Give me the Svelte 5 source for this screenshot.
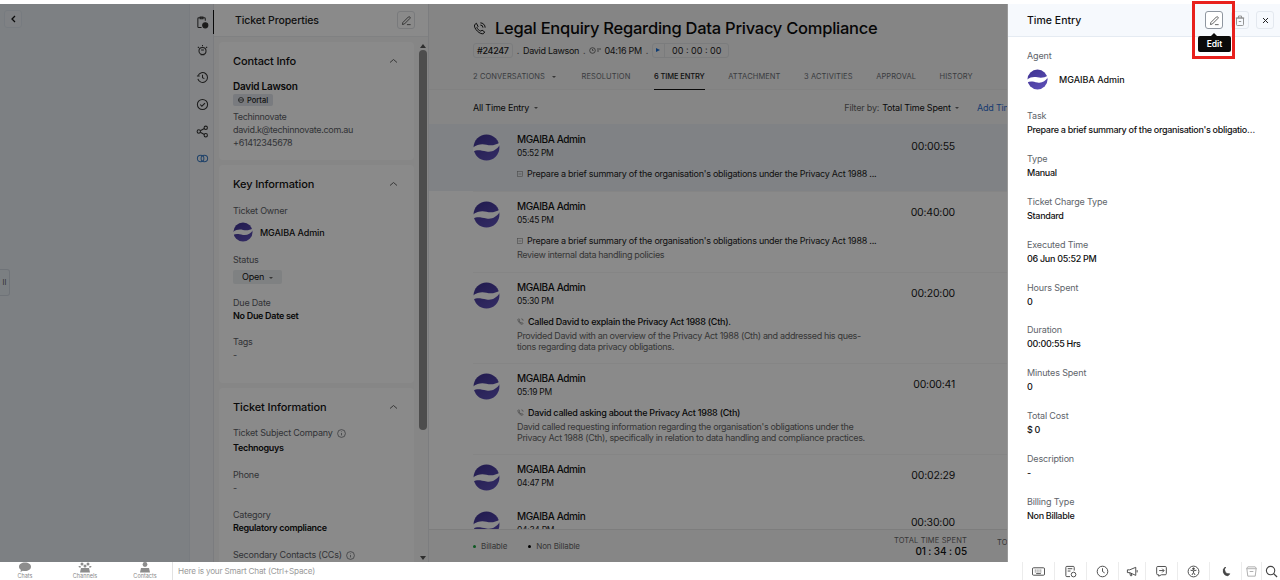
<script lang="ts">
  const rail = ["props", "bulb", "history", "check", "share", "link"];

  const tabs = [
    { label: "2 CONVERSATIONS", caret: true },
    { label: "RESOLUTION" },
    { label: "6 TIME ENTRY", active: true },
    { label: "ATTACHMENT" },
    { label: "3 ACTIVITIES" },
    { label: "APPROVAL" },
    { label: "HISTORY" },
  ];

  const longTask = "Prepare a brief summary of the organisation's obligations under the Privacy Act 1988 ...";

  const entries = [
    { time: "05:52 PM", spent: "00:00:55", kind: "task", subject: longTask, selected: true, h: 67 },
    { time: "05:45 PM", spent: "00:40:00", kind: "task", subject: longTask, desc: ["Review internal data handling policies"], h: 81 },
    {
      time: "05:30 PM", spent: "00:20:00", kind: "call", subject: "Called David to explain the Privacy Act 1988 (Cth).",
      desc: ["Provided David with an overview of the Privacy Act 1988 (Cth) and addressed his ques-", "tions regarding data privacy obligations."], h: 91,
    },
    {
      time: "05:19 PM", spent: "00:00:41", kind: "call", subject: "David called asking about the Privacy Act 1988 (Cth)",
      desc: ["David called requesting information regarding the organisation's obligations under the", "Privacy Act 1988 (Cth), specifically in relation to data handling and compliance practices."], h: 91,
    },
    { time: "04:47 PM", spent: "00:02:29", h: 47 },
    { time: "04:34 PM", spent: "00:30:00", h: 47 },
  ];

  const details = [
    { label: "Task", value: "Prepare a brief summary of the organisation's obligations under the Privacy Act" },
    { label: "Type", value: "Manual" },
    { label: "Ticket Charge Type", value: "Standard" },
    { label: "Executed Time", value: "06 Jun 05:52 PM" },
    { label: "Hours Spent", value: "0" },
    { label: "Duration", value: "00:00:55 Hrs" },
    { label: "Minutes Spent", value: "0" },
    { label: "Total Cost", value: "$ 0" },
    { label: "Description", value: "-" },
    { label: "Billing Type", value: "Non Billable" },
  ];

  const dock = ["keyboard", "notes", "clock", "megaphone", "share", "access", "moon", "cup", "search"];
</script>

{#snippet logo(size)}
  <svg class="logo" width={size} height={size} viewBox="0 0 24 24">
    <defs>
      <linearGradient id="logo-fill" x1="0" y1="0" x2="0.6" y2="1">
        <stop offset="0" stop-color="#3d3190" />
        <stop offset="1" stop-color="#5b4db4" />
      </linearGradient>
    </defs>
    <circle cx="12" cy="12" r="11.5" fill="url(#logo-fill)" />
    <path d="M0 12C4 9 8 8.500 12 9.500S20 10 24 7.500v2C21 14 17 16.500 12 15.500S4 13.500 0 15.500z" fill="#fff" />
  </svg>
{/snippet}

{#snippet pencil()}
  <svg width="11" height="11" viewBox="0 0 12 12" fill="none" stroke="currentColor" stroke-width=".9">
    <path d="M2 8.200 8 2.200a1.100 1.100 0 0 1 1.700 1.600L3.700 9.800 1.600 10.400z" />
    <path d="M6.500 10.500h4" />
  </svg>
{/snippet}

{#snippet chevron()}
  <svg class="chev" width="9" height="6" viewBox="0 0 9 6" fill="none" stroke="currentColor" stroke-width=".9">
    <path d="M1 4.500 4.500 1.500 8 4.500" />
  </svg>
{/snippet}

{#snippet info()}
  <svg class="info" width="9" height="9" viewBox="0 0 9 9" fill="none" stroke="currentColor" stroke-width=".7">
    <circle cx="4.500" cy="4.500" r="3.900" /><path d="M4.500 4v2.400M4.500 2.500v.6" />
  </svg>
{/snippet}

{#snippet railIcon(name)}
  <svg width="13" height="13" viewBox="0 0 14 14" fill="none" stroke="currentColor" stroke-width="1.1">
    {#if name === "props"}
      <path d="M6 12.500H3a1 1 0 0 1-1-1V3a1 1 0 0 1 1-1h6a1 1 0 0 1 1 1v2" />
      <path d="M4.500 1h3v2h-3z" />
      <circle cx="10" cy="10" r="2.800" fill="currentColor" />
    {:else if name === "bulb"}
      <circle cx="7" cy="7.500" r="3.800" />
      <path d="M5 11.500h4M7 1v1.500M2 3l1.200 1.200M12 3l-1.200 1.200M5.500 6.500h3" />
    {:else if name === "history"}
      <path d="M2.200 5A5.300 5.300 0 1 1 2 8.500" />
      <path d="M1 5.500h3M7 4v3.200l2 1" />
    {:else if name === "check"}
      <circle cx="7" cy="7" r="5.500" /><path d="M4.500 7 6.300 8.800 9.700 5.400" />
    {:else if name === "share"}
      <circle cx="3" cy="7" r="1.800" /><circle cx="10.500" cy="3" r="1.800" /><circle cx="10.500" cy="11" r="1.800" />
      <path d="M4.600 6.200 9 3.800M4.600 7.800 9 10.200" />
    {:else}
      <circle cx="5" cy="7" r="3.500" /><circle cx="9" cy="7" r="3.500" />
    {/if}
  </svg>
{/snippet}

{#snippet dockIcon(name)}
  <svg width="13" height="13" viewBox="0 0 14 14" fill="none" stroke="currentColor" stroke-width="1">
    {#if name === "keyboard"}
      <rect x="0.500" y="3" width="13" height="8" rx="1.200" /><path d="M3 5.500h8M3 7.500h8" stroke-dasharray="1 1" /><path d="M4.500 9.300h5" />
    {:else if name === "notes"}
      <path d="M6.500 12.500H3a1 1 0 0 1-1-1v-9a1 1 0 0 1 1-1h7a1 1 0 0 1 1 1V6" /><path d="M4 4h5M4 6.500h3" /><circle cx="10.300" cy="10.300" r="2.500" />
    {:else if name === "clock"}
      <circle cx="7" cy="7" r="5.700" /><path d="M7 3.500V7l2.300 1.500" />
    {:else if name === "megaphone"}
      <path d="M1.500 5.200v3h2.500l6.500 3V2.500L4 5.200zM4 8.200l.8 3.300h1.500l-.6-2.700M12 5.500v2.500" />
    {:else if name === "share"}
      <path d="M4 12V10.500H3a1.200 1.200 0 0 1-1.200-1.200V2.800A1.200 1.200 0 0 1 3 1.600h8a1.200 1.200 0 0 1 1.200 1.200v6.500a1.200 1.200 0 0 1-1.200 1.200H7z" /><path d="M4.500 6h5M7.800 4l2 2-2 2" />
    {:else if name === "access"}
      <circle cx="7" cy="7" r="5.800" /><circle cx="7" cy="4" r=".9" fill="currentColor" /><path d="M3.800 5.600 7 6.300l3.200-.7M7 6.300V8M7 8l-1.700 2.800M7 8l1.700 2.800" />
    {:else if name === "moon"}
      <path d="M9.500 11.500A5 5 0 0 1 7 2.200 4.500 4.500 0 0 0 11.500 9.500a5 5 0 0 1-2 2z" fill="currentColor" />
    {:else if name === "cup"}
      <path d="M2 4h10l-1 8H3zM1.500 4l1.500-2h8l1.500 2M5 7h4" />
    {:else}
      <circle cx="6" cy="6" r="4.500" stroke-width="1.200" /><path d="M9.300 9.300 13 13" stroke-width="1.400" />
    {/if}
  </svg>
{/snippet}

<div class="page">
  <div class="topstrip"></div>

  <div class="workspace">
    <aside class="nav">
      <button class="back" aria-label="Back">
        <svg width="7" height="8" viewBox="0 0 7 8" fill="none" stroke="currentColor" stroke-width="1.3"><path d="M5 1 2 4l3 3" /></svg>
      </button>
      <div class="handle">II</div>
    </aside>

    <nav class="rail">
      {#each rail as r, i}
        <div class="rail-item" class:on={i === 0} class:link={r === "link"}>{@render railIcon(r)}</div>
      {/each}
    </nav>

    <section class="props">
      <header class="props-head">
        <span>Ticket Properties</span>
        <button class="icon-btn" aria-label="Edit properties">{@render pencil()}</button>
      </header>
      <div class="props-body">
        <div class="cards">
          <div class="card card-contact">
            <h3>Contact Info {@render chevron()}</h3>
            <div class="person">David Lawson</div>
            <span class="pill">
              <svg width="6" height="6" viewBox="0 0 6 6" fill="none" stroke="currentColor" stroke-width=".7"><circle cx="3" cy="3" r="2.500" /><path d="M.5 3h5" /></svg>
              Portal
            </span>
            <div class="sub">Techinnovate</div>
            <div class="sub">david.k@techinnovate.com.au</div>
            <div class="sub">+61412345678</div>
          </div>

          <div class="card card-key">
            <h3>Key Information {@render chevron()}</h3>
            <div class="label owner-label">Ticket Owner</div>
            <div class="owner">{@render logo(20)}<b>MGAIBA Admin</b></div>
            <div class="label status-label">Status</div>
            <span class="status">Open <i class="caret"></i></span>
            <div class="label due-label">Due Date</div>
            <div class="value">No Due Date set</div>
            <div class="label tags-label">Tags</div>
            <div class="dash">-</div>
          </div>

          <div class="card">
            <h3>Ticket Information {@render chevron()}</h3>
            <div class="label">Ticket Subject Company {@render info()}</div>
            <div class="value first">Technoguys</div>
            <div class="label gap">Phone</div>
            <div class="dash">-</div>
            <div class="label gap">Category</div>
            <div class="value">Regulatory compliance</div>
            <div class="label gap">Secondary Contacts (CCs) {@render info()}</div>
          </div>
        </div>
        <div class="scrollbar"><i class="up"></i><b></b><i class="down"></i></div>
      </div>
    </section>

    <main class="ticket">
      <header class="ticket-head">
        <h1>
          <svg width="13" height="13" viewBox="0 0 15 15" fill="none" stroke="currentColor" stroke-width="1.1">
            <path d="M4 1.500 2 3c-1 2 .5 5 3 7.500s5.500 3.500 7 3l1.500-2-3-2-1.500 1C7 10 5 8 4.500 6.500l1.300-1.300zM8.500 3.500a3 3 0 0 1 3 3M8.500 1a5.500 5.500 0 0 1 5.500 5.500" />
          </svg>
          Legal Enquiry Regarding Data Privacy Compliance
        </h1>
        <div class="meta">
          <span class="tag">#24247</span>
          <span class="dot">.</span>
          <span>David Lawson</span>
          <span class="dot">.</span>
          <span class="at">
            <svg width="13" height="7" viewBox="0 0 13 7" fill="none" stroke="currentColor" stroke-width=".8"><circle cx="3.500" cy="3.500" r="2.800" /><path d="M3.500 2v1.500h1M8 2h4M8 4h2" /></svg>
            04:16 PM
          </span>
          <span class="dot">.</span>
          <span class="timer">
            <span class="play"></span>
            <span class="clock">00 : 00 : 00</span>
          </span>
        </div>
      </header>

      <div class="tabs">
        {#each tabs as t}
          <span class="tab" class:active={t.active}>{t.label}{#if t.caret}<i class="caret"></i>{/if}</span>
        {/each}
      </div>

      <div class="filter">
        <span class="all">All Time Entry <i class="caret"></i></span>
        <span class="filter-by">Filter by:</span>
        <span class="total">Total Time Spent <i class="caret"></i></span>
        <span class="add">Add Time</span>
      </div>

      <div class="entries">
        {#each entries as e, i}
          <div class="entry" class:selected={e.selected} style="height: {e.h}px">
            {@render logo(27)}
            <div class="entry-main">
              <div class="entry-name">MGAIBA Admin</div>
              <div class="entry-time">{e.time}</div>
              {#if e.subject}
                <div class="entry-subject" class:call={e.kind === "call"}>
                  {#if e.kind === "call"}
                    <svg width="7" height="7" viewBox="0 0 8 8" fill="none" stroke="currentColor" stroke-width=".9"><path d="M2 .8 1 1.800c0 2.500 2.500 5.200 5 5.400l1-1-1.500-1-.8.500C3.800 5.300 2.800 4.200 2.500 3.300l.6-.7zM5 1a2 2 0 0 1 2 2" /></svg>
                  {:else}
                    <svg width="6" height="6" viewBox="0 0 6 6" fill="none" stroke="currentColor" stroke-width=".6"><rect x=".5" y=".5" width="5" height="5" /><path d="M1.500 3h3" /></svg>
                  {/if}
                  <span>{e.subject}</span>
                </div>
              {/if}
              {#if e.desc}
                <div class="entry-desc">
                  {#each e.desc as line}<div>{line}</div>{/each}
                </div>
              {/if}
            </div>
            <div class="entry-spent">{e.spent}</div>
            {#if i > 0 && i < 5}<i class="entry-line"></i>{/if}
          </div>
        {/each}
      </div>

      <footer class="ticket-foot">
        <span class="legend"><i class="green"></i>Billable</span>
        <span class="legend"><i class="black"></i>Non Billable</span>
        <div class="total-spent">
          <small>TOTAL TIME SPENT</small>
          <strong>01 : 34 : 05</strong>
        </div>
        <div class="total-cut"><small>TOTAL</small></div>
      </footer>
    </main>

    <div class="dim"></div>

    <aside class="drawer">
      <header class="drawer-head">
        <h2>Time Entry</h2>
        <button class="icon-btn focus" aria-label="Edit">{@render pencil()}</button>
        <button class="icon-btn plain trash" aria-label="Delete">
          <svg width="10" height="11" viewBox="0 0 10 11" fill="none" stroke="currentColor" stroke-width=".9"><path d="M1.500 3h7v6.500a1 1 0 0 1-1 1h-5a1 1 0 0 1-1-1zM.8 3h8.400M3.500 3V1h3v2M3.800 6.500h2.400" /></svg>
        </button>
        <button class="icon-btn plain" aria-label="Close">
          <svg width="7" height="7" viewBox="0 0 7 7" fill="none" stroke="#222" stroke-width="1"><path d="m1 1 5 5M6 1 1 6" /></svg>
        </button>
      </header>

      <div class="drawer-body">
        <div class="d-label">Agent</div>
        <div class="agent">{@render logo(21)}<span>MGAIBA Admin</span></div>
        {#each details as d}
          <div class="field">
            <div class="d-label">{d.label}</div>
            <div class="d-value">{d.value}</div>
          </div>
        {/each}
      </div>
    </aside>

    <div class="tooltip">Edit</div>
    <div class="callout"></div>
  </div>

  <footer class="dock">
    <div class="quick">
      <span>
        <svg width="14" height="11" viewBox="0 0 14 11"><path d="M7 .5c3.500 0 6 1.800 6 4.200S10.500 9 7 9c-.8 0-1.500-.1-2.200-.3L2.500 10l.4-2.200C1.700 7 1 5.900 1 4.700 1 2.300 3.500.5 7 .5z" fill="#8d8d8d" /></svg>
        Chats
      </span>
      <span>
        <svg width="14" height="11" viewBox="0 0 14 11" fill="#8d8d8d"><circle cx="4" cy="2" r="1.500" /><circle cx="10" cy="2" r="1.500" /><circle cx="7" cy="4" r="1.500" /><path d="M3 6h8l1 4.500H2zM.5 4h2l.5 1.500H1zM11.500 4h2l-.5 1.500h-2z" /></svg>
        Channels
      </span>
      <span>
        <svg width="14" height="11" viewBox="0 0 14 11" fill="#8d8d8d"><circle cx="7" cy="2.500" r="2.400" /><path d="M3 6h8l1 4.500H2z" /></svg>
        Contacts
      </span>
    </div>
    <div class="smart">Here is your Smart Chat (Ctrl+Space)</div>
    <div class="tools">
      {#each dock as d}
        <span class="tool tool-{d}">{@render dockIcon(d)}</span>
      {/each}
    </div>
  </footer>
</div>

<style>
  :global(body) {
    margin: 0;
    background: #fff;
  }

  .page {
    width: 1280px;
    height: 580px;
    display: flex;
    flex-direction: column;
    overflow: hidden;
    font-family: Inter, "Noto Sans", "Liberation Sans", sans-serif;
    color: #111;
    background: #fff;
  }

  button {
    font: inherit;
    padding: 0;
    cursor: pointer;
  }

  h1, h2, h3 {
    margin: 0;
  }

  .topstrip {
    height: 4px;
    flex-shrink: 0;
  }

  .workspace {
    flex: 1;
    min-height: 0;
    display: flex;
    position: relative;
  }

  .dim {
    position: absolute;
    left: 0;
    top: 0;
    bottom: 0;
    width: 1007px;
    background: rgba(0, 0, 0, 0.46);
    pointer-events: none;
  }

  /* nav column */
  .nav {
    width: 190px;
    flex-shrink: 0;
    background: #e8edf2;
    position: relative;
    border-right: 1px solid #dfe5ec;
    box-sizing: border-box;
  }
  .back {
    position: absolute;
    left: 4px;
    top: 6px;
    width: 18px;
    height: 18px;
    background: #eaeff4;
    border: 1px solid #dde4ec;
    border-radius: 3px;
    color: #111;
    display: flex;
    align-items: center;
    justify-content: center;
  }
  .handle {
    position: absolute;
    left: 0;
    top: 265px;
    width: 10px;
    height: 27px;
    box-sizing: border-box;
    background: #e4eaf1;
    border: 1px solid #cdd5de;
    border-left: 0;
    border-radius: 0 3px 3px 0;
    font-size: 7px;
    line-height: 25px;
    text-align: center;
    color: #555;
  }

  .rail {
    width: 24px;
    flex-shrink: 0;
    background: #f2f4f7;
    border-right: 1px solid #e3e6ea;
    box-sizing: border-box;
    padding-top: 6px;
  }
  .rail-item {
    height: 27px;
    display: flex;
    align-items: center;
    padding-left: 6px;
    box-sizing: border-box;
    color: #333;
  }
  .rail-item.on {
    border-right: 1px solid #111;
    height: 24px;
    margin-bottom: 3px;
    margin-right: -1px;
  }
  .rail-item.link {
    color: #3b7bc4;
  }

  /* ticket properties */
  .props {
    width: 215px;
    flex-shrink: 0;
    display: flex;
    flex-direction: column;
    background: #f7f7f7;
    border-right: 1px solid #e6e8ea;
    box-sizing: border-box;
  }
  .props-head {
    height: 32px;
    flex-shrink: 0;
    display: flex;
    align-items: center;
    justify-content: space-between;
    padding: 0 13px 0 21px;
    background: #fff;
    font-size: 10.5px;
    font-weight: 500;
    letter-spacing: -0.1px;
    color: #222;
    border-bottom: 1px solid #eceef0;
  }
  .icon-btn {
    width: 18px;
    height: 18px;
    border: 1px solid #dfe2e6;
    border-radius: 3px;
    background: #fff;
    color: #444;
    display: flex;
    align-items: center;
    justify-content: center;
    flex-shrink: 0;
  }
  .props-body {
    flex: 1;
    min-height: 0;
    display: flex;
    padding-top: 5px;
    overflow: hidden;
  }
  .cards {
    width: 195px;
    margin-left: 5px;
    flex-shrink: 0;
    display: flex;
    flex-direction: column;
    gap: 5px;
  }
  .card {
    background: #fff;
    border-radius: 4px;
    padding: 12px 14px;
    box-sizing: border-box;
    flex-shrink: 0;
  }
  .card-contact {
    height: 118px;
  }
  .card-key {
    height: 218px;
  }
  .card h3 {
    font-size: 11px;
    font-weight: 500;
    line-height: 14px;
    letter-spacing: -0.12px;
    display: flex;
    justify-content: space-between;
    align-items: center;
    padding-right: 2px;
    color: #111;
  }
  .chev {
    color: #555;
  }
  .person {
    font-size: 10px;
    font-weight: 600;
    letter-spacing: -0.25px;
    margin-top: 12px;
    line-height: 12px;
  }
  .pill {
    display: flex;
    width: fit-content;
    align-items: center;
    gap: 3px;
    margin-top: 2px;
    height: 12px;
    padding: 0 5px;
    border-radius: 2px;
    background: #dfe4ea;
    font-size: 7.5px;
    font-weight: 500;
    color: #222;
  }
  .sub {
    font-size: 9px;
    line-height: 13px;
    letter-spacing: -0.3px;
    color: #5c6066;
  }
  .pill + .sub {
    margin-top: 4px;
  }
  .label {
    font-size: 9px;
    line-height: 12px;
    letter-spacing: -0.2px;
    color: #5c6066;
    margin-top: 13px;
    display: flex;
    align-items: center;
    gap: 4px;
  }
  .owner-label {
    margin-top: 14px;
  }
  .info {
    color: #5c6066;
  }
  .owner {
    display: flex;
    align-items: center;
    gap: 7px;
    margin-top: 5px;
    font-size: 9px;
    letter-spacing: -0.1px;
  }
  .owner b {
    font-weight: 500;
  }
  .status-label {
    margin-top: 12px;
  }
  .status {
    display: block;
    width: fit-content;
    margin-top: 4px;
    padding: 0 9px;
    height: 14px;
    line-height: 14px;
    border-radius: 2px;
    background: #ebeef1;
    font-size: 9px;
    letter-spacing: -0.2px;
  }
  .due-label {
    margin-top: 13px;
  }
  .tags-label {
    margin-top: 13px;
  }
  .value {
    font-size: 9px;
    font-weight: 600;
    line-height: 14px;
    letter-spacing: -0.3px;
    margin-top: 0;
  }
  .value.first {
    margin-top: 2px;
  }
  .dash {
    font-size: 9px;
    line-height: 14px;
    color: #5c6066;
    margin-top: 0;
  }
  .gap {
    margin-top: 14px;
  }
  .scrollbar {
    width: 8px;
    margin-left: 5px;
    flex-shrink: 0;
    position: relative;
  }
  .scrollbar b {
    position: absolute;
    left: 0;
    right: 0;
    top: 8px;
    height: 380px;
    border-radius: 4px;
    background: #8f8f8f;
  }
  .scrollbar i {
    position: absolute;
    left: 1px;
    border-left: 3px solid transparent;
    border-right: 3px solid transparent;
  }
  .scrollbar .up {
    top: 2px;
    border-bottom: 4px solid #555;
  }
  .scrollbar .down {
    bottom: 2px;
    border-top: 4px solid #555;
  }

  /* main ticket */
  .ticket {
    flex: 1;
    min-width: 0;
    display: flex;
    flex-direction: column;
    background: #fff;
  }
  .ticket-head {
    height: 63px;
    flex-shrink: 0;
    box-sizing: border-box;
    padding: 13px 0 0 44px;
    background: #f5f5f5;
  }
  h1 {
    display: flex;
    align-items: center;
    gap: 9px;
    font-size: 16.5px;
    line-height: 22px;
    font-weight: 500;
    color: #0c0c0c;
    white-space: nowrap;
    letter-spacing: -0.25px;
  }
  .meta {
    display: flex;
    align-items: center;
    gap: 4px;
    margin-top: 4px;
    font-size: 9px;
    letter-spacing: -0.3px;
    height: 15px;
    color: #1c1c1c;
  }
  .tag {
    padding: 0 3px;
    border: 1px solid #e3e5e8;
    border-radius: 3px;
    line-height: 13px;
    font-weight: 500;
  }
  .dot {
    color: #777;
  }
  .at {
    display: inline-flex;
    align-items: center;
    gap: 2px;
  }
  .at svg {
    color: #555;
  }
  .timer {
    display: inline-flex;
    align-items: center;
    height: 13px;
    border: 1px solid #e3e5e8;
    border-radius: 3px;
  }
  .play {
    width: 11px;
    height: 13px;
    border-right: 1px solid #e3e5e8;
    position: relative;
  }
  .play::after {
    content: "";
    position: absolute;
    left: 3px;
    top: 4px;
    border-left: 4px solid #1a6fd6;
    border-top: 2.5px solid transparent;
    border-bottom: 2.5px solid transparent;
  }
  .clock {
    padding: 0 7px;
    letter-spacing: 0;
  }

  .tabs {
    height: 23px;
    flex-shrink: 0;
    display: flex;
    gap: 23.5px;
    padding-left: 44px;
    background: #f5f5f5;
    border-bottom: 1px solid #eee;
    box-sizing: border-box;
    font-size: 7.5px;
    letter-spacing: 0.1px;
    color: #6c7076;
  }
  .tab {
    height: 23px;
    line-height: 20px;
    box-sizing: border-box;
    white-space: nowrap;
  }
  .tab:first-child {
    margin-right: 2px;
  }
  .tab .caret {
    margin-left: 7px;
  }
  .tab.active {
    color: #222;
    font-weight: 500;
    letter-spacing: -0.1px;
    border-bottom: 1px solid #111;
  }
  .caret {
    display: inline-block;
    vertical-align: middle;
    border-left: 2px solid transparent;
    border-right: 2px solid transparent;
    border-top: 2px solid #666;
    margin-left: 2px;
  }

  .filter {
    height: 34px;
    flex-shrink: 0;
    display: flex;
    align-items: center;
    padding-left: 44px;
    background: #f8f8f8;
    font-size: 9px;
    letter-spacing: -0.2px;
    white-space: nowrap;
    overflow: hidden;
  }
  .all {
    flex: 1;
  }
  .filter-by {
    color: #666;
    margin-right: 3px;
  }
  .add {
    color: #2f6fd0;
    margin-left: 18px;
    width: 30px;
    overflow: hidden;
    flex-shrink: 0;
  }

  .entries {
    flex: 1;
    min-height: 0;
    overflow: hidden;
    background: #fff;
  }
  .entry {
    display: flex;
    align-items: flex-start;
    padding: 10px 0 0 44px;
    box-sizing: border-box;
    position: relative;
    flex-shrink: 0;
  }
  .entry.selected {
    background: #edf1f5;
  }
  .entry .logo {
    flex-shrink: 0;
  }
  .entry-main {
    margin: -1px 0 0 17px;
    flex: 1;
    min-width: 0;
  }
  .entry-name {
    font-size: 10px;
    font-weight: 500;
    letter-spacing: -0.4px;
    line-height: 13px;
  }
  .entry-time {
    font-size: 8.5px;
    line-height: 12px;
    letter-spacing: -0.3px;
    margin-top: 1px;
    color: #222;
  }
  .entry-subject {
    display: flex;
    align-items: center;
    gap: 4px;
    font-size: 9px;
    letter-spacing: -0.25px;
    line-height: 13px;
    margin-top: 8px;
    white-space: nowrap;
    color: #222;
  }
  .entry-subject svg {
    color: #888;
    flex-shrink: 0;
  }
  .entry-subject.call {
    font-weight: 500;
    color: #111;
  }
  .entry-desc {
    margin-top: 2px;
    font-size: 9px;
    letter-spacing: -0.33px;
    line-height: 11px;
    color: #666;
    white-space: nowrap;
  }
  .entry-spent {
    position: absolute;
    right: 52px;
    top: 15px;
    font-size: 10.5px;
    letter-spacing: -0.2px;
    color: #1a1a1a;
  }
  .entry.selected .entry-spent {
    top: 16px;
  }
  .entry-line {
    position: absolute;
    left: 44px;
    right: 0;
    top: 0;
    height: 1px;
    background: #f6f6f6;
  }

  .ticket-foot {
    height: 33px;
    flex-shrink: 0;
    box-sizing: border-box;
    display: flex;
    align-items: center;
    padding: 0 0 0 44px;
    background: #f8f8f8;
    border-top: 1px solid #e8e8e8;
    font-size: 8px;
    letter-spacing: -0.1px;
    color: #666;
    overflow: hidden;
    white-space: nowrap;
  }
  .legend {
    margin-right: 21px;
    display: flex;
    align-items: center;
    gap: 5px;
  }
  .legend i {
    width: 3px;
    height: 3px;
    border-radius: 50%;
  }
  .legend .green {
    background: #18a23c;
  }
  .legend .black {
    background: #000;
  }
  .total-spent {
    margin-left: auto;
    margin-right: 30px;
    text-align: right;
    display: flex;
    flex-direction: column;
  }
  .total-spent small,
  .total-cut small {
    font-size: 7.5px;
    letter-spacing: 0.15px;
  }
  .total-spent strong {
    font-size: 10px;
    font-weight: 500;
    color: #111;
  }
  .total-cut {
    width: 10px;
    overflow: hidden;
    align-self: flex-start;
    padding-top: 7px;
  }

  /* right drawer */
  .drawer {
    width: 273px;
    flex-shrink: 0;
    background: #fff;
    border-left: 1px solid #9a9a9a;
    box-sizing: border-box;
    position: relative;
    display: flex;
    flex-direction: column;
  }
  .drawer-head {
    height: 33px;
    flex-shrink: 0;
    display: flex;
    align-items: center;
    gap: 7px;
    padding: 0 6px 0 19px;
    background: #f6f9fd;
    border-bottom: 1px solid #e5ebf2;
    box-sizing: border-box;
  }
  .drawer-head h2 {
    flex: 1;
    font-size: 10.5px;
    font-weight: 500;
  }
  .icon-btn.focus {
    border-color: #8f96a0;
    margin-right: 1px;
  }
  .icon-btn.plain {
    background: transparent;
    border-color: #e3e8ef;
  }
  .icon-btn.trash {
    color: #8a8a8a;
  }
  .drawer-body {
    padding: 12px 0 0 19px;
    font-size: 9px;
    line-height: 14px;
  }
  .d-label {
    color: #60646a;
    font-size: 9px;
    letter-spacing: -0.15px;
  }
  .agent {
    display: flex;
    align-items: center;
    gap: 11px;
    margin-top: 6px;
    height: 21px;
    font-weight: 500;
    font-size: 9px;
  }
  .field {
    margin-top: 14.9px;
    height: 28px;
  }
  .agent + .field {
    margin-top: 19px;
  }
  .field .d-label {
    line-height: 14px;
  }
  .d-value {
    font-weight: 500;
    letter-spacing: -0.3px;
    line-height: 14px;
    width: 232px;
    white-space: nowrap;
    overflow: hidden;
    text-overflow: ellipsis;
    color: #111;
  }

  .tooltip {
    position: absolute;
    left: 1198px;
    top: 32px;
    width: 33px;
    height: 16px;
    background: #0a0a0a;
    color: #fff;
    border-radius: 2px;
    font-size: 8.5px;
    font-weight: 600;
    line-height: 16px;
    text-align: center;
  }
  .tooltip::before {
    content: "";
    position: absolute;
    left: 13px;
    top: -3px;
    border-left: 3px solid transparent;
    border-right: 3px solid transparent;
    border-bottom: 3px solid #0a0a0a;
  }
  .callout {
    position: absolute;
    left: 1192px;
    top: -3px;
    width: 43px;
    height: 58px;
    box-sizing: border-box;
    border: 3px solid #e8201c;
    pointer-events: none;
  }

  /* bottom dock */
  .dock {
    height: 18px;
    flex-shrink: 0;
    display: flex;
    background: #fff;
    align-items: stretch;
  }
  .quick {
    width: 172px;
    flex-shrink: 0;
    display: flex;
    border-right: 1px solid #e2e2e2;
  }
  .quick span {
    width: 60px;
    flex-shrink: 0;
    display: flex;
    flex-direction: column;
    align-items: center;
    font-size: 5.5px;
    line-height: 6px;
    color: #888;
  }
  .quick span:first-child {
    margin-left: -5px;
  }
  .smart {
    flex: 1;
    font-size: 8.2px;
    letter-spacing: -0.2px;
    line-height: 18px;
    padding-left: 5px;
    color: #9a9a9a;
  }
  .tools {
    display: flex;
  }
  .tool {
    display: flex;
    align-items: center;
    justify-content: center;
    width: 32px;
    border-left: 1px solid #ececec;
    box-sizing: border-box;
    color: #444;
  }
  .tool-megaphone { width: 27px; }
  .tool-cup { width: 20px; color: #aaa; }
  .tool-search { width: 19px; }
</style>
